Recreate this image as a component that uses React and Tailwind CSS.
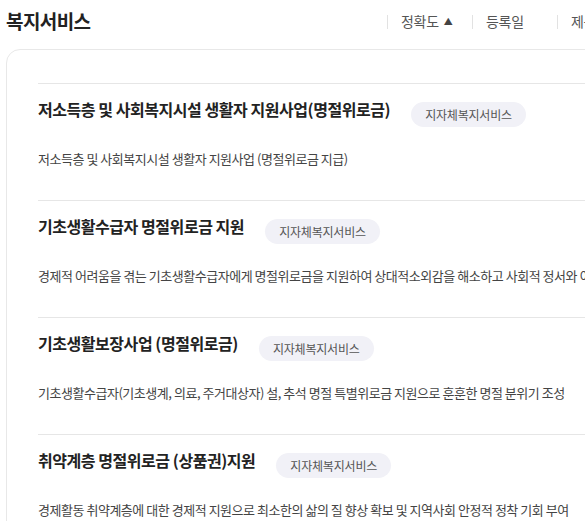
import React from "react";

const ITEMS = [
  {
    title: "저소득층 및 사회복지시설 생활자 지원사업(명절위로금)",
    desc: "저소득층 및 사회복지시설 생활자 지원사업 (명절위로금 지급)",
  },
  {
    title: "기초생활수급자 명절위로금 지원",
    desc: "경제적 어려움을 겪는 기초생활수급자에게 명절위로금을 지원하여 상대적소외감을 해소하고 사회적 정서와 이웃사랑 실천",
  },
  {
    title: "기초생활보장사업 (명절위로금)",
    desc: "기초생활수급자(기초생계, 의료, 주거대상자) 설, 추석 명절 특별위로금 지원으로 훈훈한 명절 분위기 조성",
  },
  {
    title: "취약계층 명절위로금 (상품권)지원",
    desc: "경제활동 취약계층에 대한 경제적 지원으로 최소한의 삶의 질 향상 확보 및 지역사회 안정적 정착 기회 부여",
  },
];

const SORTS = ["정확도", "등록일", "제목순"];

export default function App() {
  return (
    <div
      className="w-[585px] h-[521px] overflow-hidden bg-white"
      style={{ fontFamily: '"Noto Sans CJK KR", "Noto Sans", sans-serif' }}
    >
      <div className="w-[760px] pl-[6px]">
        <div className="flex items-center h-[43px]">
          <h2 className="text-[19px] font-semibold text-[#222] tracking-[-0.6px] w-[381px]">복지서비스</h2>
          <div className="flex items-center">
            {SORTS.map((s, i) => (
              <div key={s} className="w-[85px] flex items-center">
                <span className="w-px h-[14px] bg-[#e2e2e2]" />
                <span className="pl-[13px] text-[14px] text-[#555] tracking-[-0.3px] flex items-center gap-[5px]">
                  {s}
                  {i === 0 && <span className="text-[9px] text-[#444]">▲</span>}
                </span>
              </div>
            ))}
          </div>
        </div>
        <div className="mt-[6px] border border-[#e8e8e8] rounded-[14px] pt-[33px] px-[31px]">
          {ITEMS.map((it) => (
            <div key={it.title} className="border-t border-[#e6e6e6] pt-[13px] pb-[31px]">
              <div className="flex items-start">
                <h3 className="text-[16px] leading-[24px] font-bold text-[#222] tracking-[-0.45px] whitespace-nowrap">
                  {it.title}
                </h3>
                <span className="ml-[21px] mt-[5px] h-[25px] px-[14px] rounded-full bg-[#f1f1f7] text-[12px] text-[#555] flex items-center tracking-[-0.2px] whitespace-nowrap">
                  지자체복지서비스
                </span>
              </div>
              <p className="mt-[22px] text-[13px] leading-[20px] text-[#444] tracking-[-0.47px] whitespace-nowrap">
                {it.desc}
              </p>
            </div>
          ))}
        </div>
      </div>
    </div>
  );
}
